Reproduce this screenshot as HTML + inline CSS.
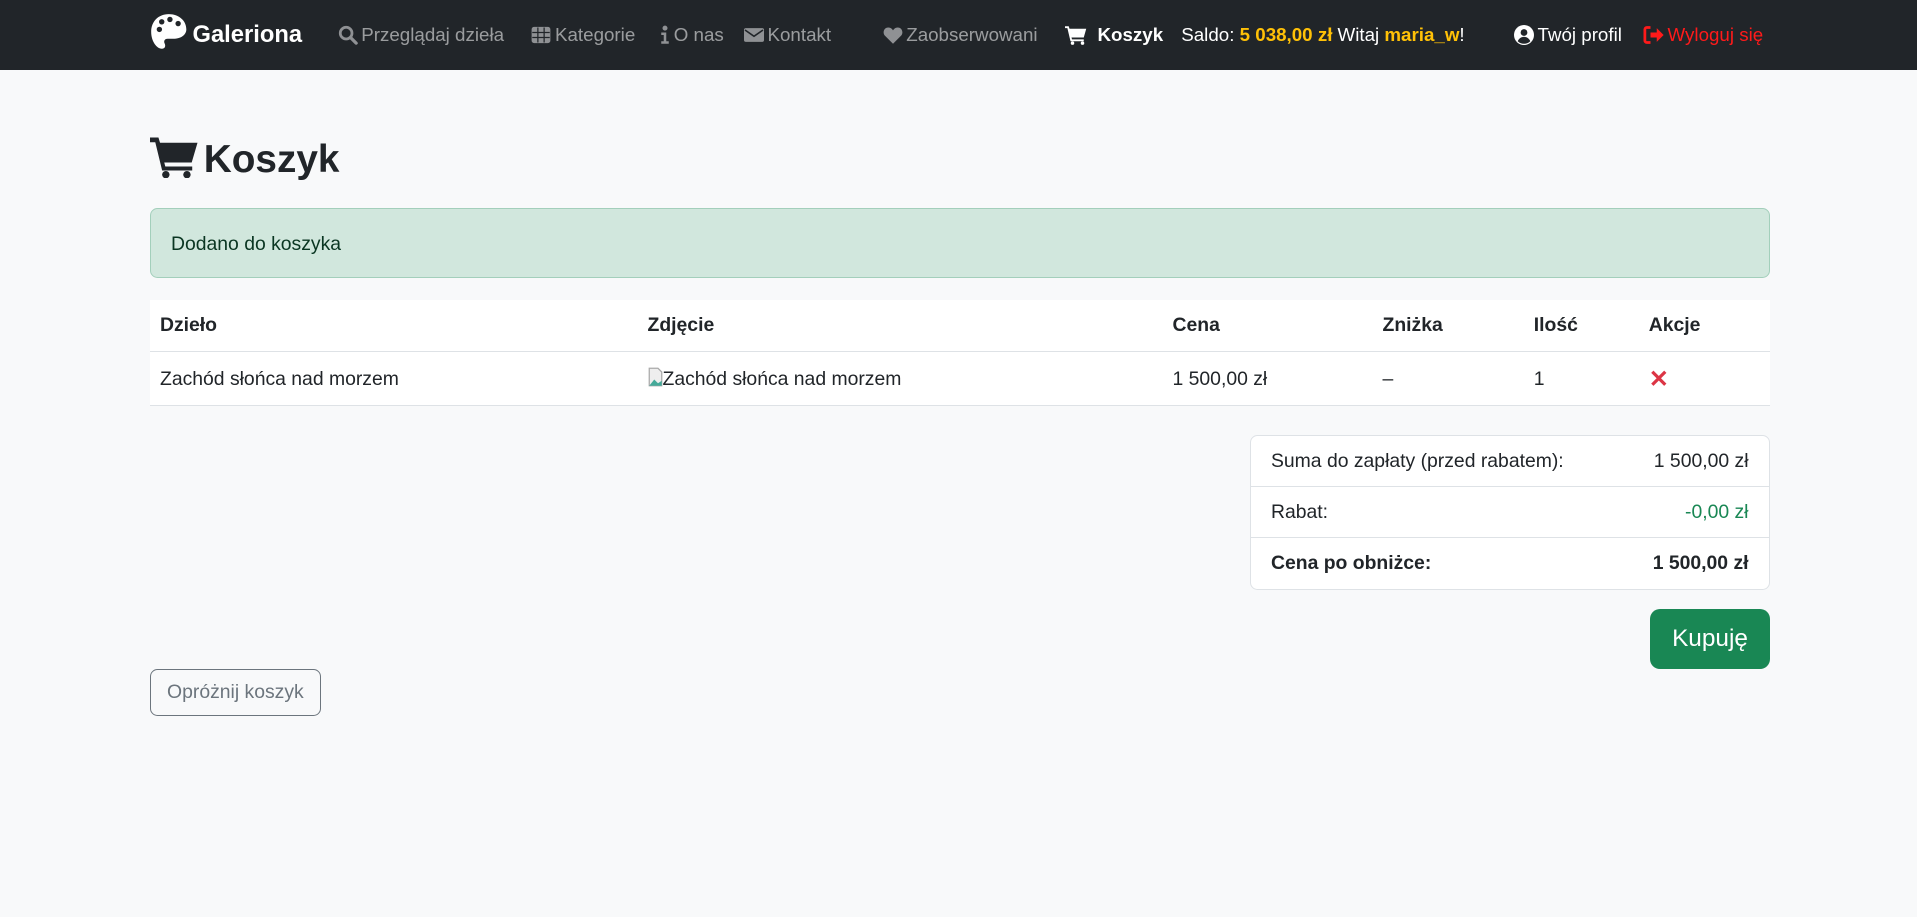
<!DOCTYPE html>
<html><head><meta charset="utf-8">
<style>
html,body{margin:0;padding:0;}
body{zoom:1.25;width:1533.6px;height:733.6px;background:#f8f9fa;font-family:"Liberation Sans",sans-serif;color:#212529;font-size:15.5px;position:relative;overflow:hidden;}
.nav{position:absolute;left:0;top:0;width:100%;height:56px;background:#212529;}
.ni{position:absolute;top:0;height:56px;line-height:56px;font-size:15px;color:rgba(255,255,255,.55);white-space:nowrap;}
.ni svg{vertical-align:-3px;margin-right:3px}
.abs{position:absolute}
.alert{position:absolute;left:120px;top:166px;width:1294px;height:55px;background:#d1e7dd;border:1px solid #a3cfbb;border-radius:6px;color:#0a3622;}
.tbl{position:absolute;left:120px;top:240px;width:1296px;background:#fff;}
.row{position:relative;height:41px;border-bottom:1px solid #dee2e6;}
.row span{position:absolute;top:0;line-height:41px;white-space:nowrap}
.card{position:absolute;left:1000px;top:348px;width:414px;height:122px;background:#fff;border:1px solid #dee2e6;border-radius:6px;}
.cr{position:relative;height:40px;border-bottom:1px solid #dee2e6}
.cr:last-child{border-bottom:none}
.cr span{position:absolute;line-height:40px;white-space:nowrap}
</style></head><body>
<div class="nav">
  <div class="ni" style="left:120px;color:#fff;font-weight:bold;font-size:19px">
    <svg width="30" height="30" viewBox="0 0 32 32" style="vertical-align:-7px;margin-right:4px"><path fill="#fff" d="M16 1C7 1 1 7.5 1 16c0 8.5 5 14.5 9 14.5 3 0 3.5-2.5 2.5-4.5-1-2 0-4 2.5-4H20c6 0 11-3 11-8C31 6.5 24.5 1 16 1z"/><circle cx="8" cy="14" r="2.3" fill="#212529"/><circle cx="10" cy="7.5" r="2.3" fill="#212529"/><circle cx="17" cy="5.5" r="2.3" fill="#212529"/><circle cx="24" cy="9" r="2.3" fill="#212529"/></svg>Galeriona</div>
  <div class="ni" style="left:270px"><svg width="16" height="16" viewBox="0 0 16 16"><circle cx="6.5" cy="6.5" r="4.7" fill="none" stroke="#8f9194" stroke-width="2.2"/><path d="M10 10l4.5 4.5" stroke="#8f9194" stroke-width="2.6" stroke-linecap="round"/></svg>Przeglądaj dzieła</div>
  <div class="ni" style="left:425px"><svg width="16" height="16" viewBox="0 0 16 16"><rect x="0.5" y="1.5" width="15" height="13" rx="2" fill="#8f9194"/><path d="M5.5 2v12M10.5 2v12M1 6h14M1 10h14" stroke="#212529" stroke-width="1"/></svg>Kategorie</div>
  <div class="ni" style="left:528px"><svg width="8" height="16" viewBox="0 0 8 16"><circle cx="4" cy="2.5" r="2" fill="#8f9194"/><path d="M1 6h4v7h2v2H1v-2h2V8H1z" fill="#8f9194"/></svg>O nas</div>
  <div class="ni" style="left:595px"><svg width="16" height="16" viewBox="0 0 16 16"><rect x="0" y="2.5" width="16" height="11" rx="1.5" fill="#8f9194"/><path d="M0.8 4l7.2 5 7.2-5" stroke="#212529" stroke-width="1.3" fill="none"/></svg>Kontakt</div>
  <div class="ni" style="left:706px"><svg width="16" height="16" viewBox="0 0 16 16"><path fill="#8f9194" d="M8 15L1.5 8.5C-.5 6.5.5 2 4.3 2 6 2 7.3 3.2 8 4.3 8.7 3.2 10 2 11.7 2c3.8 0 4.8 4.5 2.8 6.5z"/></svg>Zaobserwowani</div>
  <div class="ni" style="left:852px;color:#fff;font-weight:bold"><svg width="18" height="16" viewBox="0 0 18 16" style="margin-right:8px"><path fill="#fff" d="M0 1h3l.6 2H17l-2 7H5.2l.4 1.5H15V13H4.4L1.9 2.5H0z"/><circle cx="6" cy="14.5" r="1.4" fill="#fff"/><circle cx="14" cy="14.5" r="1.4" fill="#fff"/></svg>Koszyk</div>
  <div class="ni" style="left:945px;color:#fff">Saldo: <b style="color:#ffc107">5 038,00 zł</b></div>
  <div class="ni" style="left:1070px;color:#fff">Witaj <b style="color:#ffc107">maria_w</b>!</div>
  <div class="ni" style="left:1211px;color:#fff"><svg width="16" height="16" viewBox="0 0 16 16"><circle cx="8" cy="8" r="8" fill="#fff"/><circle cx="8" cy="6" r="2.7" fill="#212529"/><path d="M3 13c1-2.5 3-3.5 5-3.5s4 1 5 3.5c-1.3 1.3-3 2-5 2s-3.7-.7-5-2z" fill="#212529"/></svg>Twój profil</div>
  <div class="ni" style="left:1314px;color:#ff1a1a"><svg width="17" height="16" viewBox="0 0 17 16"><path d="M6 2H3a1.5 1.5 0 00-1.5 1.5v9A1.5 1.5 0 003 14h3" stroke="#ff1a1a" stroke-width="2.2" fill="none"/><path fill="#ff1a1a" d="M6 6h5V2.5L16.5 8 11 13.5V10H6z"/></svg>Wyloguj się</div>
</div>

<div class="abs" style="left:120px;top:104px;height:48px;line-height:48px;font-size:31px;font-weight:bold;white-space:nowrap"><svg width="38" height="34" viewBox="0 0 18 16" style="vertical-align:-5px;margin-right:5px"><path fill="#212529" d="M0 0.5h3.2l.6 2H18l-2.2 7.5H5.4l.4 1.5H16V13H4.6L2 2.3H0z"/><circle cx="6" cy="14.6" r="1.4" fill="#212529"/><circle cx="14" cy="14.6" r="1.4" fill="#212529"/></svg>Koszyk</div>

<div class="alert"><span class="abs" style="left:16px;top:1px;line-height:55px;">Dodano do koszyka</span></div>

<div class="tbl">
  <div class="row" style="font-weight:bold"><span style="left:8px">Dzieło</span><span style="left:398px">Zdjęcie</span><span style="left:818px">Cena</span><span style="left:986px">Zniżka</span><span style="left:1107px">Ilość</span><span style="left:1199px">Akcje</span></div>
  <div class="row" style="height:42px"><span style="left:8px;line-height:44px">Zachód słońca nad morzem</span><span style="left:398px;line-height:44px"><svg width="12" height="16" viewBox="0 0 12 16" style="vertical-align:-1px"><path d="M1 1h7l3 3v11H1z" fill="#eee" stroke="#aaa"/><path d="M1 15l4-5 3 3 3-2v4z" fill="#4a9"/></svg>Zachód słońca nad morzem</span><span style="left:818px;line-height:44px">1 500,00 zł</span><span style="left:986px;line-height:44px">–</span><span style="left:1107px;line-height:44px">1</span><span style="left:1199px;line-height:44px;color:#dc3545;font-size:19px;font-weight:bold">✕</span></div>
</div>

<div class="card">
  <div class="cr"><span style="left:16px">Suma do zapłaty (przed rabatem):</span><span style="right:16px">1 500,00 zł</span></div>
  <div class="cr"><span style="left:16px">Rabat:</span><span style="right:16px;color:#198754">-0,00 zł</span></div>
  <div class="cr" style="font-weight:bold"><span style="left:16px">Cena po obniżce:</span><span style="right:16px">1 500,00 zł</span></div>
</div>

<div class="abs" style="left:1320px;top:487px;width:96px;height:48px;background:#198754;border-radius:8px;color:#fff;font-size:19.5px;line-height:48px;text-align:center">Kupuję</div>

<div class="abs" style="left:120px;top:535px;width:135px;height:36px;border:1px solid #6c757d;border-radius:6px;color:#6c757d;line-height:36px;text-align:center">Opróżnij koszyk</div>
</body></html>
